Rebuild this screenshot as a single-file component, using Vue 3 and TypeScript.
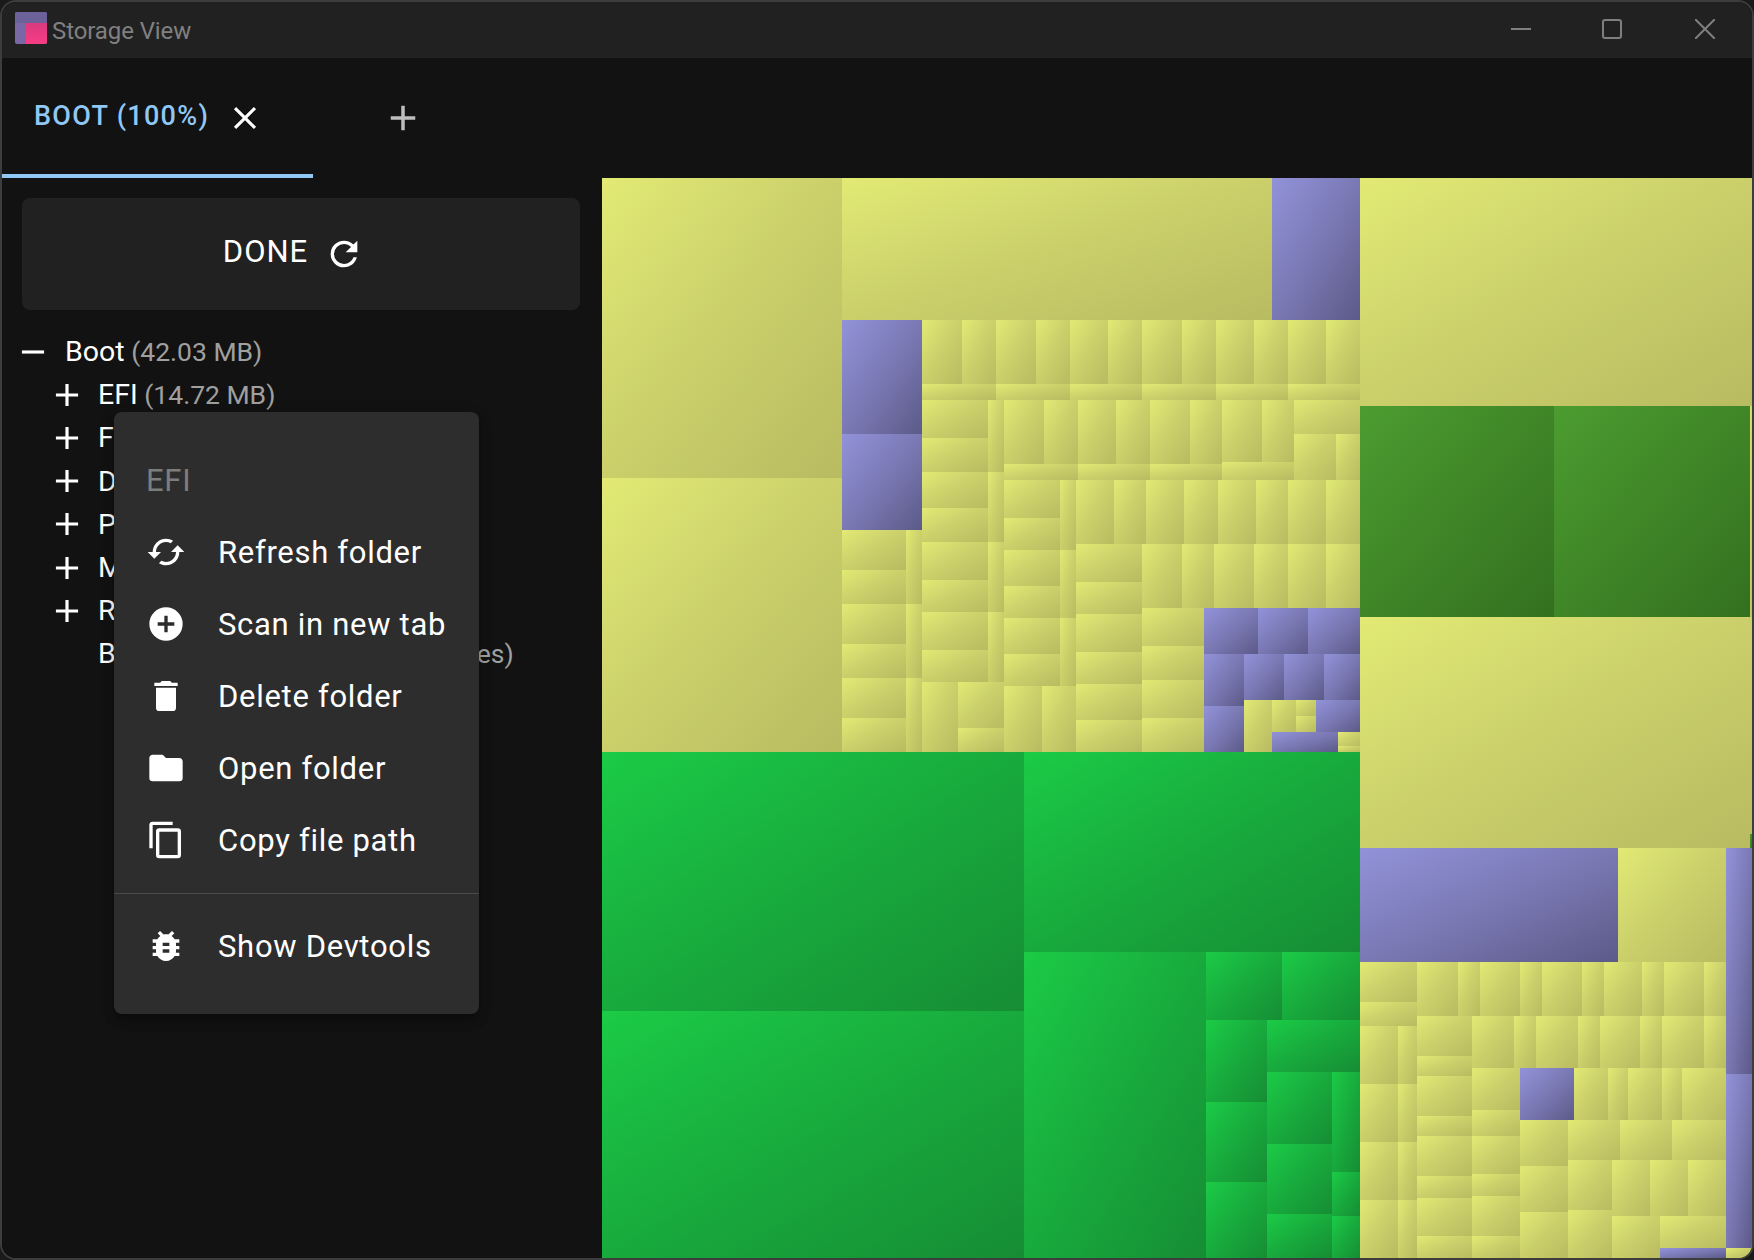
<script setup lang="ts">
type Kind = 'y' | 'p' | 'g' | 'd'
interface Tile { x0: number; y0: number; x1: number; y1: number; k: Kind }
const tiles: Tile[] = []
const rect = (x0: number, y0: number, x1: number, y1: number, k: Kind = 'y') => tiles.push({ x0, y0, x1, y1, k })
const row = (y0: number, y1: number, xs: number[], k: Kind = 'y') => {
  for (let i = 0; i + 1 < xs.length; i++) rect(xs[i], y0, xs[i + 1], y1, k)
}
const col = (x0: number, x1: number, ys: number[], k: Kind = 'y') => {
  for (let i = 0; i + 1 < ys.length; i++) rect(x0, ys[i], x1, ys[i + 1], k)
}
// large blocks
col(602, 842, [178, 478, 752])
rect(842, 178, 1272, 320)
rect(1272, 178, 1360, 320, 'p')
rect(1360, 178, 1752, 406)
rect(1750, 406, 1752, 617)
row(406, 617, [1360, 1554, 1750], 'd')
rect(1360, 617, 1752, 848)
rect(1750, 834, 1752, 848, 'd')
// central yellow treemap
col(842, 922, [320, 434, 530], 'p')
col(842, 906, [530, 570, 604, 644, 678, 718, 752])
col(906, 922, [530, 604, 678, 752])
row(320, 384, [922, 962, 996, 1036, 1070, 1108, 1142, 1182, 1216, 1254, 1288, 1326, 1360])
row(384, 400, [922, 996, 1070, 1142, 1216, 1288, 1360])
col(922, 988, [400, 438, 472, 508, 542, 580, 612, 650, 682])
col(988, 1004, [400, 472, 542, 612, 682])
rect(922, 682, 958, 752)
col(958, 1004, [682, 728, 752])
row(400, 464, [1004, 1044, 1078, 1116, 1150, 1190, 1222])
row(400, 462, [1222, 1262, 1294])
row(464, 480, [1004, 1078, 1150, 1222])
rect(1222, 462, 1294, 480)
rect(1294, 400, 1360, 434)
row(434, 480, [1294, 1336, 1360])
col(1004, 1060, [480, 518, 550, 586, 618, 654, 686])
col(1060, 1076, [480, 550, 618, 686])
row(686, 752, [1004, 1042, 1076])
row(480, 544, [1076, 1114, 1146, 1184, 1218, 1256, 1288, 1326, 1360])
col(1076, 1142, [544, 582, 614, 652, 684, 720, 752])
row(544, 608, [1142, 1182, 1214, 1254, 1288, 1326, 1360])
col(1142, 1204, [608, 646, 680, 718, 752])
row(608, 654, [1204, 1258, 1308, 1360], 'p')
rect(1204, 654, 1244, 706, 'p')
row(654, 700, [1244, 1284, 1324, 1360], 'p')
rect(1204, 706, 1244, 752, 'p')
rect(1244, 700, 1272, 752)
rect(1272, 700, 1296, 732)
col(1296, 1316, [700, 716, 732])
rect(1316, 700, 1360, 732, 'p')
rect(1272, 732, 1338, 752, 'p')
col(1338, 1360, [732, 746, 752])
// green area
col(602, 1024, [752, 1011, 1258], 'g')
rect(1024, 752, 1360, 952, 'g')
rect(1024, 952, 1206, 1258, 'g')
row(952, 1020, [1206, 1282, 1360], 'g')
col(1206, 1267, [1020, 1102, 1182, 1258], 'g')
rect(1267, 1020, 1360, 1072, 'g')
col(1267, 1332, [1072, 1144, 1214, 1258], 'g')
col(1332, 1360, [1072, 1172, 1216, 1258], 'g')
// bottom-right yellow treemap
rect(1360, 848, 1618, 962, 'p')
rect(1618, 848, 1726, 962)
col(1726, 1752, [848, 1074, 1248], 'p')
rect(1726, 1248, 1752, 1258)
col(1360, 1417, [962, 1002, 1026])
col(1360, 1398, [1026, 1084, 1142, 1200, 1258])
col(1398, 1417, [1026, 1084, 1142, 1200, 1258])
row(962, 1016, [1417, 1458, 1480, 1520, 1542, 1582, 1604, 1642, 1664, 1704, 1726])
col(1417, 1472, [1016, 1056, 1076, 1116, 1136, 1176, 1198, 1236, 1258])
row(1016, 1068, [1472, 1514, 1536, 1578, 1600, 1640, 1662, 1704, 1726])
col(1472, 1520, [1068, 1110, 1136, 1174, 1196, 1236, 1258])
rect(1520, 1068, 1574, 1120, 'p')
row(1068, 1120, [1574, 1608, 1628, 1662, 1682, 1726])
rect(1520, 1120, 1568, 1166)
row(1120, 1160, [1568, 1620, 1672, 1726])
col(1520, 1568, [1166, 1212, 1258])
rect(1568, 1160, 1612, 1210)
row(1160, 1216, [1612, 1650, 1688, 1726])
rect(1568, 1210, 1612, 1258)
rect(1612, 1216, 1660, 1258)
rect(1660, 1216, 1726, 1248)
rect(1660, 1248, 1726, 1258, 'p')

const tileStyle = (t: Tile) => ({
  left: `${t.x0 - 602}px`,
  top: `${t.y0 - 178}px`,
  width: `${t.x1 - t.x0}px`,
  height: `${t.y1 - t.y0}px`,
})

const P = {
  close: 'M19,6.41L17.59,5L12,10.59L6.41,5L5,6.41L10.59,12L5,17.59L6.41,19L12,13.41L17.59,19L19,17.59L13.41,12L19,6.41Z',
  plus: 'M19,13H13V19H11V13H5V11H11V5H13V11H19V13Z',
  minus: 'M19,13H5V11H19V13Z',
  refresh: 'M17.65,6.35C16.2,4.9 14.21,4 12,4A8,8 0 0,0 4,12A8,8 0 0,0 12,20C15.73,20 18.84,17.45 19.73,14H17.65C16.83,16.33 14.61,18 12,18A6,6 0 0,1 6,12A6,6 0 0,1 12,6C13.66,6 15.14,6.69 16.22,7.78L13,11H20V4L17.65,6.35Z',
  cached: 'M19 8l-4 4h3c0 3.31-2.69 6-6 6-1.01 0-1.97-.25-2.8-.7l-1.46 1.46C8.97 19.54 10.43 20 12 20c4.42 0 8-3.58 8-8h3l-4-4zM6 12c0-3.31 2.69-6 6-6 1.01 0 1.97.25 2.8.7l1.46-1.46C15.03 4.46 13.57 4 12 4c-4.42 0-8 3.58-8 8H1l4 4 4-4H6z',
  plusCircle: 'M17,13H13V17H11V13H7V11H11V7H13V11H17M12,2A10,10 0 0,0 2,12A10,10 0 0,0 12,22A10,10 0 0,0 22,12A10,10 0 0,0 12,2Z',
  del: 'M19,4H15.5L14.5,3H9.5L8.5,4H5V6H19M6,19A2,2 0 0,0 8,21H16A2,2 0 0,0 18,19V7H6V19Z',
  folder: 'M10,4H4C2.89,4 2,4.89 2,6V18A2,2 0 0,0 4,20H20A2,2 0 0,0 22,18V8C22,6.89 21.1,6 20,6H12L10,4Z',
  copy: 'M19,21H8V7H19M19,5H8A2,2 0 0,0 6,7V21A2,2 0 0,0 8,23H19A2,2 0 0,0 21,21V7A2,2 0 0,0 19,5M16,1H4A2,2 0 0,0 2,3V17H4V3H16V1Z',
  bug: 'M14,12H10V10H14M14,16H10V14H14M20,8H17.19C16.74,7.22 16.12,6.55 15.37,6.04L17,4.41L15.59,3L13.42,5.17C12.96,5.06 12.5,5 12,5C11.5,5 11.04,5.06 10.59,5.17L8.41,3L7,4.41L8.62,6.04C7.88,6.55 7.26,7.22 6.81,8H4V10H6.09C6.04,10.33 6,10.66 6,11V12H4V14H6V15C6,15.34 6.04,15.67 6.09,16H4V18H6.81C7.85,19.79 9.78,21 12,21C14.22,21 16.15,19.79 17.19,18H20V16H17.91C17.96,15.67 18,15.34 18,15V14H20V12H18V11C18,10.66 17.96,10.33 17.91,10H20V8Z',
}

const folders = [
  { name: 'EFI', size: '(14.72 MB)', toggle: true },
  { name: 'Fonts', size: '(12.09 MB)', toggle: true },
  { name: 'DVD', size: '(6.41 MB)', toggle: true },
  { name: 'PCAT', size: '(3.12 MB)', toggle: true },
  { name: 'Microsoft', size: '(2.87 MB)', toggle: true },
  { name: 'Resources', size: '(1.84 MB)', toggle: true },
  { name: 'Boot Files', size: '(980.32 KB, 102 entries)', toggle: false },
]

const menuItems = [
  { icon: P.cached, label: 'Refresh folder' },
  { icon: P.plusCircle, label: 'Scan in new tab' },
  { icon: P.del, label: 'Delete folder' },
  { icon: P.folder, label: 'Open folder' },
  { icon: P.copy, label: 'Copy file path' },
]
</script>

<template>
  <div class="window">
    <header class="titlebar">
      <div class="logo"><span class="logo-top"></span><span class="logo-pink"></span></div>
      <span class="title">Storage View</span>
      <div class="controls">
        <svg class="ctl" viewBox="0 0 20 20"><path d="M0 10H20" /></svg>
        <svg class="ctl ctl-max" viewBox="0 0 20 20"><rect x="1" y="1" width="18" height="18" rx="2" /></svg>
        <svg class="ctl" viewBox="0 0 20 20"><path d="M0 0L20 20M20 0L0 20" /></svg>
      </div>
    </header>

    <nav class="tabs">
      <div class="tab">
        <span class="tab-label">BOOT (100%)</span>
        <svg class="tab-close" viewBox="0 0 24 24"><path :d="P.close" /></svg>
      </div>
      <svg class="tab-add" viewBox="0 0 24 24"><path :d="P.plus" /></svg>
    </nav>

    <main class="body">
      <aside class="side">
        <button class="done">
          <span>DONE</span>
          <svg class="done-icon" viewBox="0 0 24 24"><path :d="P.refresh" /></svg>
        </button>

        <div class="tree">
          <div class="node root">
            <svg class="toggle" viewBox="0 0 24 24"><path :d="P.minus" /></svg>
            <span class="name">Boot</span>&nbsp;<span class="size">(42.03 MB)</span>
          </div>
          <div v-for="f in folders" :key="f.name" class="node child">
            <svg v-if="f.toggle" class="toggle" viewBox="0 0 24 24"><path :d="P.plus" /></svg>
            <span v-else class="toggle"></span>
            <span class="name">{{ f.name }}</span>&nbsp;<span class="size">{{ f.size }}</span>
          </div>
        </div>

        <div class="menu">
          <div class="menu-head">EFI</div>
          <div v-for="m in menuItems" :key="m.label" class="menu-item">
            <svg class="menu-icon" viewBox="0 0 24 24"><path :d="m.icon" /></svg>
            <span>{{ m.label }}</span>
          </div>
          <hr class="menu-div" />
          <div class="menu-item">
            <svg class="menu-icon" viewBox="0 0 24 24"><path :d="P.bug" /></svg>
            <span>Show Devtools</span>
          </div>
        </div>
      </aside>

      <section class="map">
        <div v-for="(t, i) in tiles" :key="i" class="tile" :class="t.k" :style="tileStyle(t)"></div>
      </section>
    </main>
  </div>
</template>

<style>
html, body { margin: 0; background: #1a1a1a; }
</style>

<style scoped>
.window {
  width: 1754px;
  height: 1260px;
  box-sizing: border-box;
  border: 2px solid #3d3d3d;
  border-radius: 16px;
  background: #121212;
  overflow: hidden;
  display: flex;
  flex-direction: column;
  font-family: Roboto, "Liberation Sans", sans-serif;
  color: #fff;
}
.titlebar {
  height: 56px;
  flex: none;
  background: #212121;
  display: flex;
  align-items: center;
  padding-left: 13px;
  padding-bottom: 5px;
  box-sizing: border-box;
}
.logo {
  width: 32px;
  height: 32px;
  border-radius: 2px;
  background: #7a67a6;
  position: relative;
  overflow: hidden;
  flex: none;
}
.logo-top {
  position: absolute;
  left: 0;
  top: 0;
  right: 0;
  height: 11px;
  background: #6d6199;
}
.logo-pink {
  position: absolute;
  left: 11px;
  top: 11px;
  right: 0;
  bottom: 0;
  background: linear-gradient(#d93a80, #f83c84);
}
.title {
  margin-left: 5px;
  padding-top: 6px;
  font-size: 24px;
  letter-spacing: -0.1px;
  color: #808080;
}
.controls {
  margin-left: auto;
  margin-right: 37px;
  display: flex;
  gap: 72px;
  padding-top: 2px;
}
.ctl {
  width: 20px;
  height: 20px;
  fill: none;
  stroke: #7f7f7f;
  stroke-width: 2;
}
.ctl-max {
  margin-left: -1px;
  margin-right: 1px;
}
.tabs {
  height: 120px;
  flex: none;
  display: flex;
  background: #121212;
}
.tab {
  width: 311px;
  box-sizing: border-box;
  height: 120px;
  border-bottom: 4px solid #90c7f5;
  display: flex;
  align-items: center;
  padding: 4px 0 0 32px;
}
.tab-label {
  font-size: 27px;
  font-weight: 500;
  letter-spacing: 1.3px;
  color: #90c7f5;
  position: relative;
  top: -2px;
}
.tab-close {
  width: 38px;
  height: 38px;
  fill: #fff;
  margin-left: 17px;
}
.tab-add {
  width: 42px;
  height: 42px;
  fill: #bdbdbd;
  margin: 39px 0 0 69px;
}
.body {
  flex: 1;
  display: flex;
  min-height: 0;
}
.side {
  width: 600px;
  flex: none;
  position: relative;
  background: #121212;
}
.done {
  margin: 20px 0 0 20px;
  width: 558px;
  height: 112px;
  border: none;
  border-radius: 8px;
  background: #212121;
  color: #fff;
  font: 400 31px Roboto, sans-serif;
  letter-spacing: 1px;
  display: flex;
  align-items: center;
  justify-content: center;
  gap: 16px;
  padding: 0 15px 6px 0;
}
.done-icon {
  width: 40px;
  height: 40px;
  fill: #fff;
  position: relative;
  top: 3px;
}
.tree {
  margin-top: 20px;
}
.node {
  height: 43.2px;
  display: flex;
  align-items: center;
  white-space: pre;
  font-size: 26.5px;
}
.root { padding-left: 12px; }
.root .toggle { margin-right: 13px; }
.child { padding-left: 46px; }
.toggle {
  width: 38px;
  height: 38px;
  flex: none;
  fill: #fff;
  margin-right: 12px;
}
.name { color: #fff; font-size: 28.5px; }
.size { color: #a0a0a0; }
.menu {
  position: absolute;
  left: 112px;
  top: 234px;
  width: 365px;
  height: 602px;
  box-sizing: border-box;
  padding: 33px 0 0;
  background: #2d2d2d;
  border-radius: 8px;
  box-shadow: 0 5px 5px -3px rgba(0,0,0,.2), 0 8px 10px 1px rgba(0,0,0,.14), 0 3px 14px 2px rgba(0,0,0,.12);
}
.menu-head {
  height: 71px;
  display: flex;
  align-items: center;
  padding-left: 32px;
  font-size: 31px;
  letter-spacing: 0.7px;
  color: #7d7d7d;
}
.menu-item {
  height: 72px;
  display: flex;
  align-items: center;
  padding-left: 32px;
  font-size: 31px;
  letter-spacing: 0.7px;
  color: #fff;
  white-space: nowrap;
}
.menu-icon {
  width: 40px;
  height: 40px;
  flex: none;
  fill: #fff;
  margin-right: 32px;
}
.menu-div {
  margin: 17px 0 16px;
  border: none;
  border-top: 1px solid #4a4a4a;
}
.map {
  flex: 1;
  position: relative;
  overflow: hidden;
  background: #d0d46c;
}
.tile { position: absolute; }
.y { background: linear-gradient(to bottom right, #e2ea74, #cbd06b 48%, #b8bb60); }
.p { background: linear-gradient(to bottom right, #9292da, #7a79b4 50%, #5c5a88); }
.g { background: linear-gradient(to bottom right, #1bcb46, #18aa3d 50%, #168d34); }
.d { background: linear-gradient(to bottom right, #4c9c30, #33701f); }
</style>
